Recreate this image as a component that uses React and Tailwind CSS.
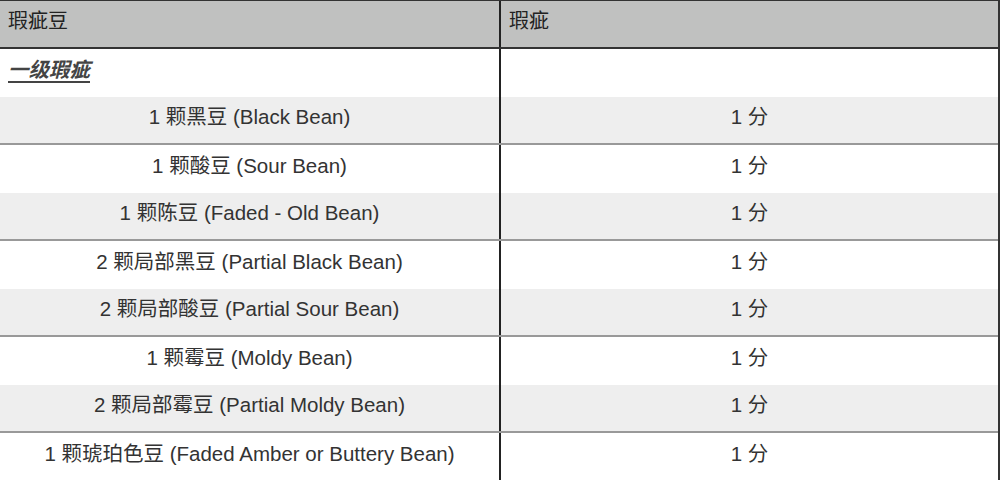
import React from 'react';

const rows = [
  { name: '1 颗黑豆 (Black Bean)', score: '1 分' },
  { name: '1 颗酸豆 (Sour Bean)', score: '1 分' },
  { name: '1 颗陈豆 (Faded - Old Bean)', score: '1 分' },
  { name: '2 颗局部黑豆 (Partial Black Bean)', score: '1 分' },
  { name: '2 颗局部酸豆 (Partial Sour Bean)', score: '1 分' },
  { name: '1 颗霉豆 (Moldy Bean)', score: '1 分' },
  { name: '2 颗局部霉豆 (Partial Moldy Bean)', score: '1 分' },
  { name: '1 颗琥珀色豆 (Faded Amber or Buttery Bean)', score: '1 分' },
];

const font = { fontFamily: '"Liberation Sans", "Noto Sans CJK SC", sans-serif' };

const App = () => {
  return (
    <div className="w-[1000px] h-[480px] overflow-hidden bg-white text-[#333]" style={font}>
      <div className="border-t border-[#333] border-r-2 border-r-[#333] w-[1000px]">
        <div className="flex h-[48px] bg-[#c0c1c0] border-b-2 border-[#333] text-[#222] text-[20px]">
          <div className="w-[501px] border-r-2 border-[#222] flex items-center pl-2 pb-[6px]">瑕疵豆</div>
          <div className="flex-1 flex items-center pl-2 pb-[6px]">瑕疵</div>
        </div>

        <div className="flex h-[48px] bg-white">
          <div className="w-[501px] border-r-2 border-[#222] flex items-center pl-2 pb-[6px]">
            <span className="italic font-bold underline underline-offset-4 text-[20.5px] text-[#444]">一级瑕疵</span>
          </div>
          <div className="flex-1" />
        </div>

        {rows.map((row, i) => {
          const shaded = i % 2 === 0;
          return (
            <div
              key={i}
              className={`flex h-[48px] text-[20.5px] ${shaded ? 'bg-[#eeeeee] border-b-2 border-[#999]' : 'bg-white'}`}
            >
              <div className="w-[501px] border-r-2 border-[#222] flex items-center justify-center pb-[6px]">
                {row.name}
              </div>
              <div className="flex-1 flex items-center justify-center pb-[6px]">{row.score}</div>
            </div>
          );
        })}
      </div>
    </div>
  );
};

export default App;
